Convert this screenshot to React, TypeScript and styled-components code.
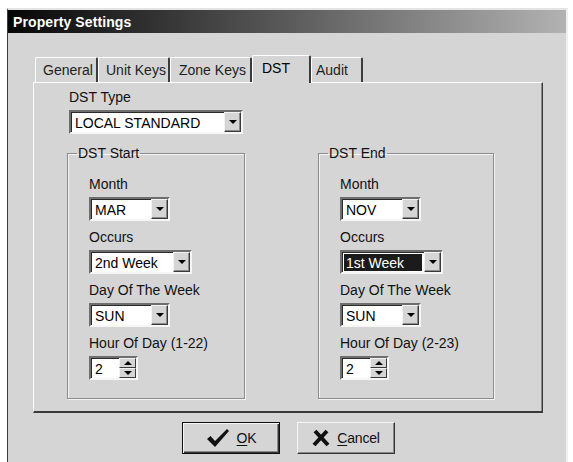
import React from 'react';
import styled, { createGlobalStyle } from 'styled-components';

const GlobalStyle = createGlobalStyle`
  html, body { margin: 0; padding: 0; background: #ffffff; }
  body { font-family: "Liberation Sans", Arial, sans-serif; font-size: 14px; color: #000; }
  * { box-sizing: border-box; }
`;

const Page = styled.div`
  width: 573px;
  height: 462px;
  overflow: hidden;
  padding: 8px 0 0 7px;
  background: #ffffff;
`;

const Window = styled.div`
  width: 561px;
  height: 470px;
  background: #d5d5d5;
  border-left: 1px solid #3a3a3a;
  border-top: 2px solid #e4e4e4;
  border-right: 2px solid #efefef;
  display: flex;
  flex-direction: column;
`;

const TitleBar = styled.div`
  height: 23px;
  display: flex;
  align-items: center;
  padding-left: 5px;
  background: linear-gradient(to right, #060606 0%, #5a5a5a 50%, #b2b2b2 100%);
  color: #ffffff;
  font-weight: bold;
  font-size: 14px;
  letter-spacing: 0.1px;
`;

const Content = styled.div`
  padding: 22px 0 0 25px;
  display: flex;
  flex-direction: column;
`;

const TabStrip = styled.div`
  display: flex;
  align-items: flex-end;
  height: 27px;
  padding-left: 2px;
  position: relative;
  z-index: 1;
`;

const Tab = styled.div<{ $active?: boolean; $w: number; $pad: number }>`
  width: ${(p) => p.$w}px;
  height: ${(p) => (p.$active ? 28 : 25)}px;
  margin-bottom: ${(p) => (p.$active ? -1 : 0)}px;
  display: flex;
  align-items: center;
  padding-left: ${(p) => p.$pad}px;
  padding-bottom: ${(p) => (p.$active ? 3 : 1)}px;
  background: #d5d5d5;
  border-top: 1px solid #ffffff;
  border-left: 1px solid #ffffff;
  border-right: 2px solid #3c3c3c;
  border-radius: 2px 2px 0 0;
  color: ${(p) => (p.$active ? '#000' : '#1e1e1e')};
  white-space: nowrap;
`;

const Panel = styled.div`
  width: 510px;
  height: 331px;
  border-top: 1px solid #ffffff;
  border-left: 1px solid #ffffff;
  border-right: 1px solid #3a3a3a;
  border-bottom: 2px solid #3a3a3a;
  box-shadow: inset -1px 0 0 #8a8a8a;
  padding: 6px 0 0 33px;
  display: flex;
  flex-direction: column;
`;

const TypeBlock = styled.div`
  padding-left: 2px;
  display: flex;
  flex-direction: column;
`;

const Label = styled.div`
  line-height: 17px;
  height: 17px;
  margin-bottom: 4px;
  white-space: nowrap;
  color: #111;
`;

const GroupRow = styled.div`
  display: flex;
  gap: 73px;
  margin-top: 11px;
`;

const Group = styled.fieldset<{ $w: number }>`
  width: ${(p) => p.$w}px;
  height: 254px;
  margin: 0;
  padding: 0;
  min-width: 0;
  border: 1px solid #8c8c8c;
  box-shadow: 1px 1px 0 #f4f4f4, inset 1px 1px 0 #f4f4f4;
`;

const Legend = styled.legend`
  margin-left: 9px;
  padding: 0 1px;
  line-height: 16px;
  color: #111;
`;

const GroupBody = styled.div`
  padding: 15px 0 0 21px;
  display: flex;
  flex-direction: column;
`;

const Field = styled.div`
  display: flex;
  flex-direction: column;
  margin-bottom: 8px;
`;

const Sunken = styled.div<{ $w: number }>`
  width: ${(p) => p.$w}px;
  height: 24px;
  display: flex;
  background: #ffffff;
  border-style: solid;
  border-width: 2px;
  border-color: #6e6e6e #f6f6f6 #f6f6f6 #6e6e6e;
  box-shadow: inset 1px 1px 0 #2a2a2a;
`;

const Value = styled.div<{ $selected?: boolean }>`
  flex: 1;
  display: flex;
  align-items: center;
  margin: 2px 2px 1px 2px;
  padding-left: 2px;
  background: ${(p) => (p.$selected ? '#1b1b1b' : 'transparent')};
  color: ${(p) => (p.$selected ? '#ffffff' : '#000000')};
  white-space: nowrap;
  overflow: hidden;
`;

const ArrowButton = styled.div`
  width: 17px;
  height: 20px;
  display: flex;
  align-items: center;
  justify-content: center;
  background: #d5d5d5;
  border-style: solid;
  border-width: 1px;
  border-color: #f2f2f2 #3a3a3a #3a3a3a #f2f2f2;
  box-shadow: inset -1px -1px 0 #8a8a8a;
`;

const SpinButtons = styled.div`
  width: 17px;
  height: 20px;
  display: flex;
  flex-direction: column;
`;

const SpinHalf = styled.div`
  flex: 1;
  display: flex;
  align-items: center;
  justify-content: center;
  background: #d5d5d5;
  border-style: solid;
  border-width: 1px;
  border-color: #f2f2f2 #3a3a3a #3a3a3a #f2f2f2;
`;

const Tri = styled.span<{ $up?: boolean }>`
  width: 0;
  height: 0;
  border-left: 4px solid transparent;
  border-right: 4px solid transparent;
  ${(p) => (p.$up ? 'border-bottom: 4px solid #000;' : 'border-top: 4px solid #000;')}
`;

const ButtonRow = styled.div`
  display: flex;
  justify-content: center;
  gap: 17px;
  margin-top: 9px;
  padding-left: 3px;
`;

const Button = styled.div<{ $default?: boolean }>`
  width: 98px;
  height: 32px;
  display: flex;
  align-items: center;
  justify-content: center;
  gap: 7px;
  background: #d5d5d5;
  border: 1px solid;
  border-color: ${(p) => (p.$default ? '#111 #111 #111 #111' : '#f6f6f6 #333 #333 #f6f6f6')};
  box-shadow: ${(p) =>
    p.$default
      ? 'inset 1px 1px 0 #f6f6f6, inset -1px -1px 0 #333, inset -2px -2px 0 #8a8a8a'
      : 'inset -1px -1px 0 #8a8a8a'};
  color: #111;
  font-size: 14px;
`;

const ButtonText = styled.span`
  letter-spacing: -0.2px;
  & u { text-underline-offset: 2px; }
`;

function Select({ w, value, selected }: { w: number; value: string; selected?: boolean }) {
  return (
    <Sunken $w={w}>
      <Value $selected={selected}>{value}</Value>
      <ArrowButton>
        <Tri />
      </ArrowButton>
    </Sunken>
  );
}

function Spin({ value }: { value: string }) {
  return (
    <Sunken $w={49}>
      <Value>{value}</Value>
      <SpinButtons>
        <SpinHalf>
          <Tri $up />
        </SpinHalf>
        <SpinHalf>
          <Tri />
        </SpinHalf>
      </SpinButtons>
    </Sunken>
  );
}

function DstGroup({
  title,
  w,
  month,
  occurs,
  day,
  hourLabel,
  occursSelected,
}: {
  title: string;
  w: number;
  month: string;
  occurs: string;
  day: string;
  hourLabel: string;
  occursSelected?: boolean;
}) {
  return (
    <Group $w={w}>
      <Legend>{title}</Legend>
      <GroupBody>
        <Field>
          <Label>Month</Label>
          <Select w={81} value={month} />
        </Field>
        <Field>
          <Label>Occurs</Label>
          <Select w={103} value={occurs} selected={occursSelected} />
        </Field>
        <Field>
          <Label>Day Of The Week</Label>
          <Select w={81} value={day} />
        </Field>
        <Field>
          <Label>{hourLabel}</Label>
          <Spin value="2" />
        </Field>
      </GroupBody>
    </Group>
  );
}

const CheckIcon = () => (
  <svg width="24" height="20" viewBox="0 0 24 20">
    <polygon points="1,11 4.5,8 9,13 21,1 23,3 9,19" fill="#111" />
  </svg>
);

const CrossIcon = () => (
  <svg width="18" height="18" viewBox="0 0 18 18">
    <path d="M3 2 L16 16 M15 2 L2 16" stroke="#111" strokeWidth="4" strokeLinecap="butt" />
  </svg>
);

const tabs = [
  { label: 'General', w: 63, pad: 7 },
  { label: 'Unit Keys', w: 72, pad: 7 },
  { label: 'Zone Keys', w: 82, pad: 8 },
  { label: 'DST', w: 59, pad: 9, active: true },
  { label: 'Audit', w: 52, pad: 4 },
];

export default function App() {
  return (
    <>
      <GlobalStyle />
      <Page>
        <Window>
          <TitleBar>Property Settings</TitleBar>
          <Content>
            <TabStrip>
              {tabs.map((t) => (
                <Tab key={t.label} $w={t.w} $pad={t.pad} $active={t.active}>
                  {t.label}
                </Tab>
              ))}
            </TabStrip>
            <Panel>
              <TypeBlock>
                <Label>DST Type</Label>
                <Select w={174} value="LOCAL STANDARD" />
              </TypeBlock>
              <GroupRow>
                <DstGroup
                  title="DST Start"
                  w={178}
                  month="MAR"
                  occurs="2nd Week"
                  day="SUN"
                  hourLabel="Hour Of Day (1-22)"
                />
                <DstGroup
                  title="DST End"
                  w={176}
                  month="NOV"
                  occurs="1st Week"
                  day="SUN"
                  hourLabel="Hour Of Day (2-23)"
                  occursSelected
                />
              </GroupRow>
            </Panel>
          </Content>
          <ButtonRow>
            <Button $default>
              <CheckIcon />
              <ButtonText>
                <u>O</u>K
              </ButtonText>
            </Button>
            <Button>
              <CrossIcon />
              <ButtonText>
                <u>C</u>ancel
              </ButtonText>
            </Button>
          </ButtonRow>
        </Window>
      </Page>
    </>
  );
}
